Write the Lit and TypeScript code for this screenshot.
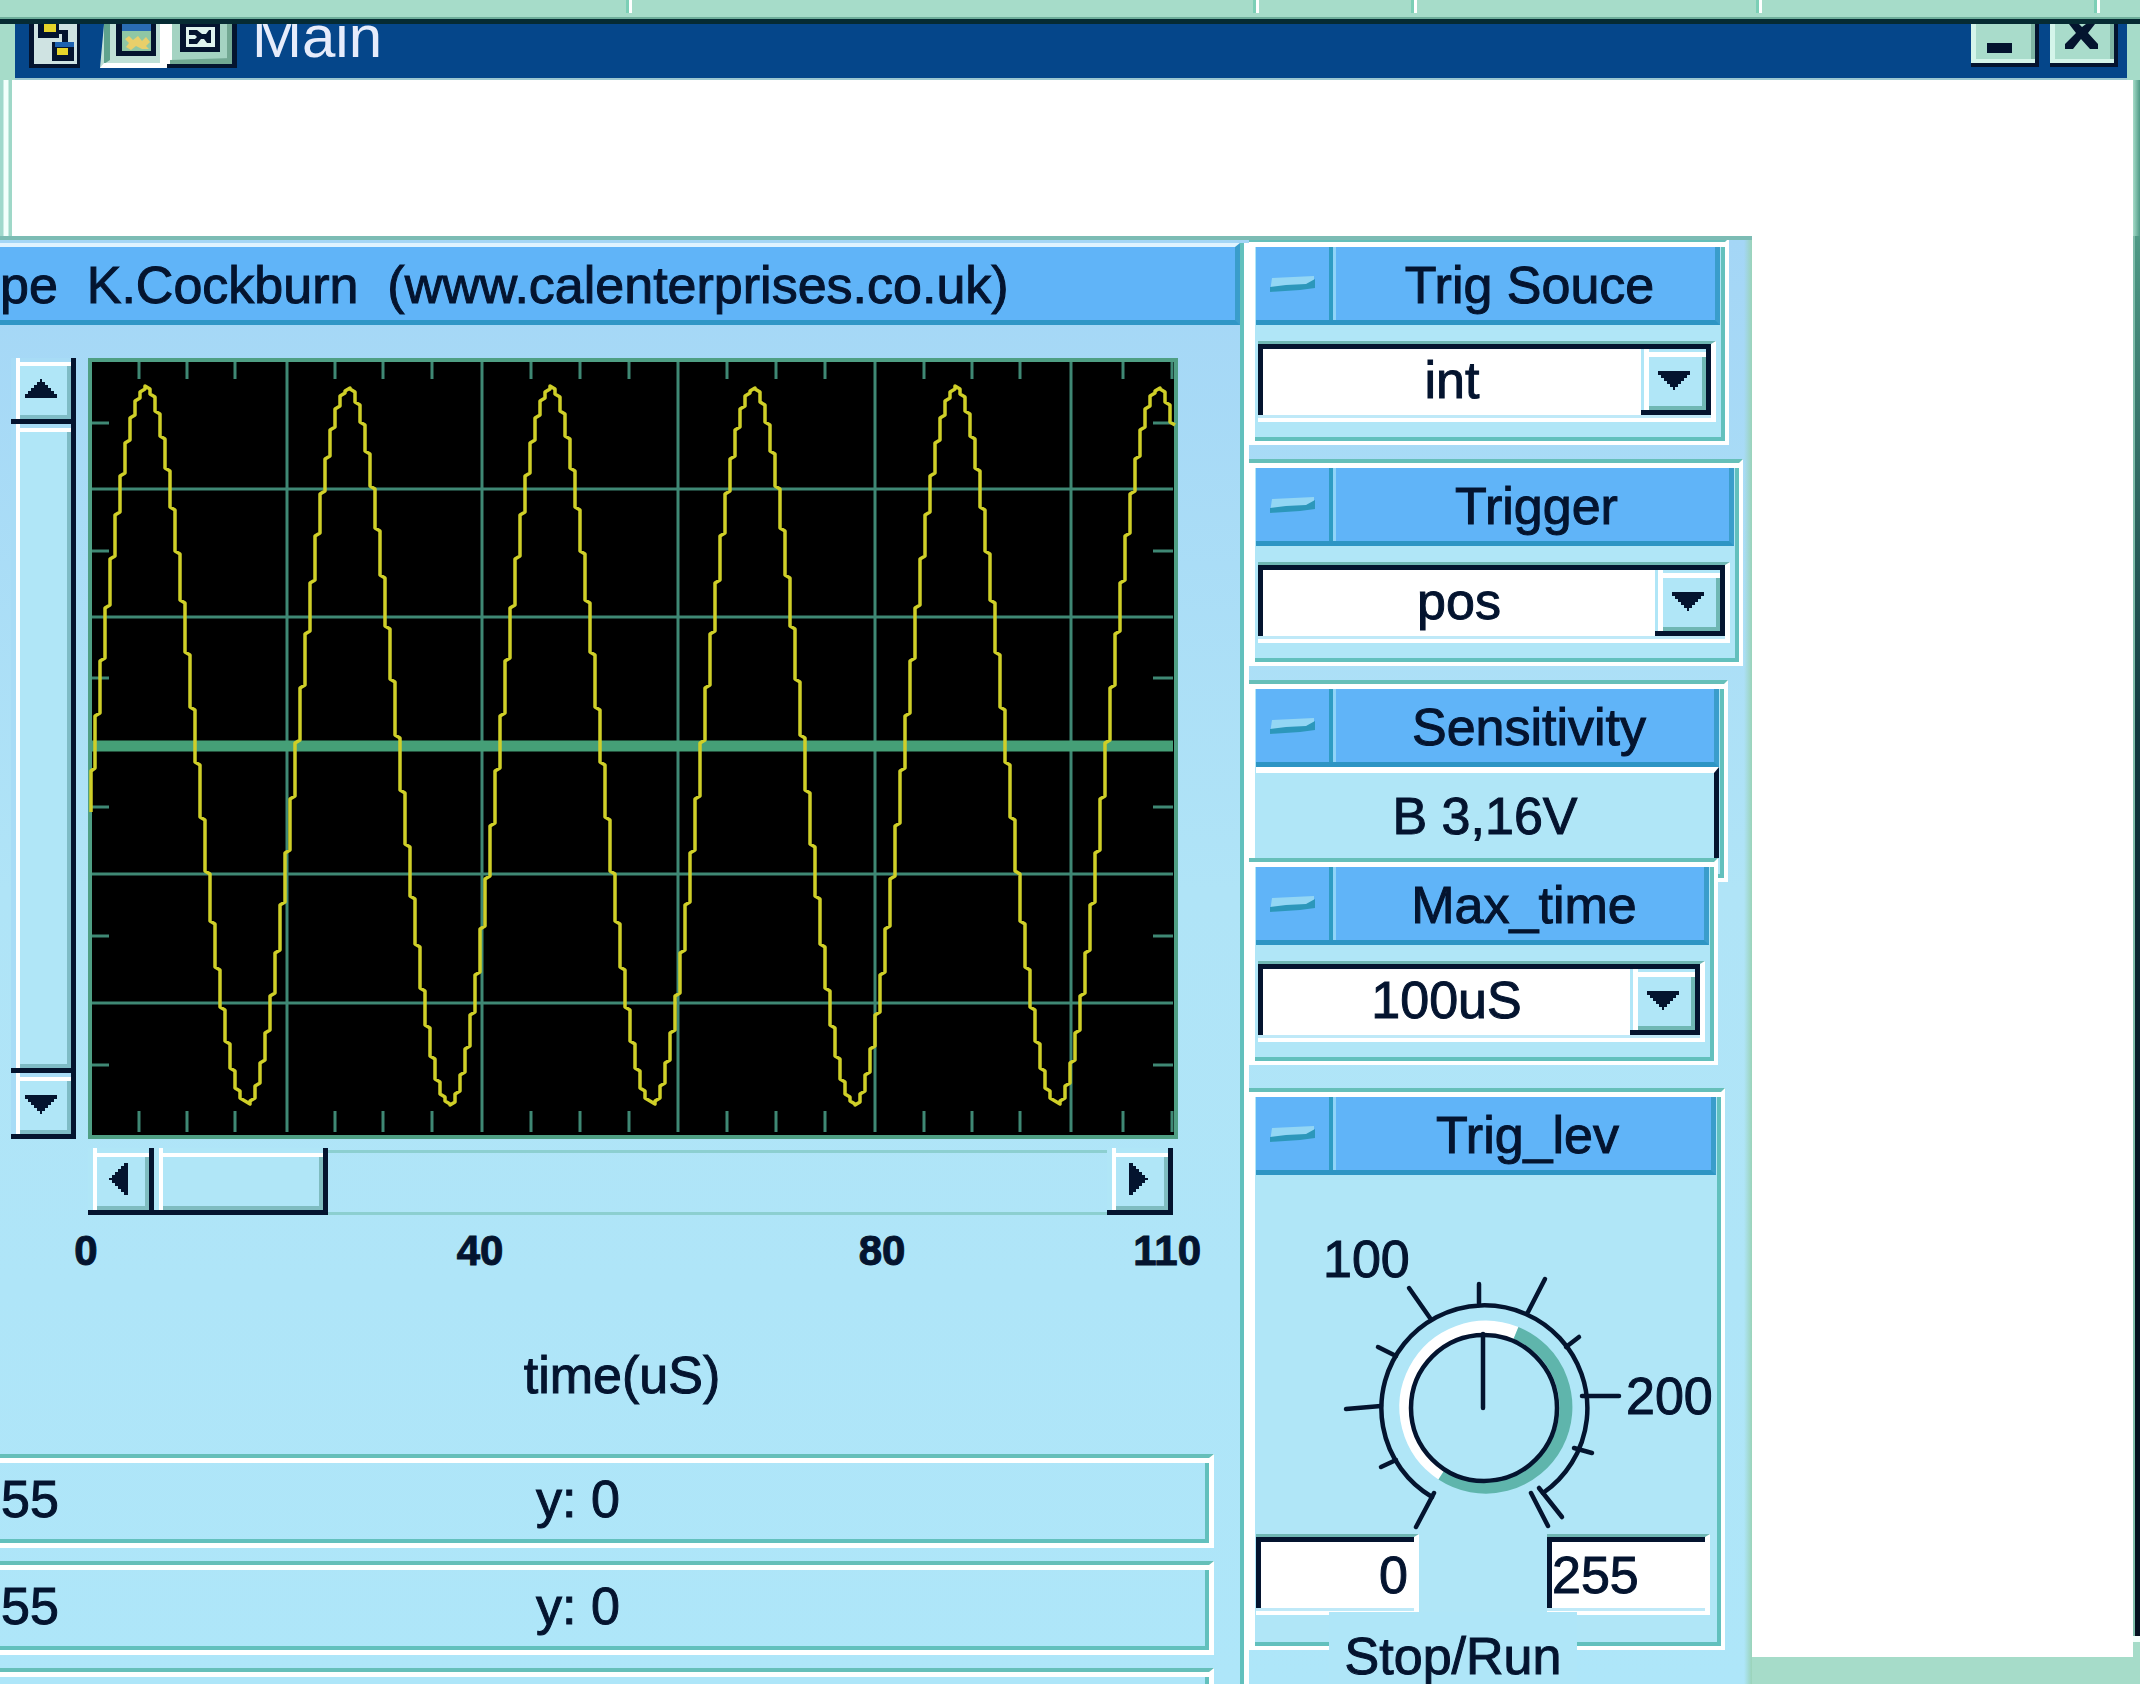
import { LitElement, html, svg, css } from "lit";
import { customElement, property } from "lit/decorators.js";

const theme = css`
  *, *::before, *::after { box-sizing: border-box; }
  .sunken {
    border-top: 3px solid #6fb7b4;
    border-right: 5px solid #fff;
    border-bottom: 4px solid #fff;
    padding-bottom: 3px;
    background: #bfe9f8;
  }
  .well {
    border-top: 5px solid #04142f;
    border-left: 5px solid #04142f;
    background: #fff;
    height: 71px;
  }
`;

/** A titled group box with an etched outline. */
@customElement("group-box")
class GroupBox extends LitElement {
  @property() heading = "";
  static styles = [theme, css`
    :host { display: block; position: relative; }
    .box {
      height: 100%;
      border-top: 4px solid #66bfb9;
      border-right: 4px solid #fff;
      border-bottom: 4px solid #fff;
      padding: 5px 5px 4px 7px;
      background: #b0e6f7;
      box-shadow: inset 6px 0 0 #fff, inset 0 5px 0 #fff, inset -4px -4px 0 #62c0bd;
    }
    .head {
      display: flex;
      height: 78px;
      background: #60b4f8;
      border-bottom: 5px solid #2d95c4;
      border-right: 5px solid #3a9dcb;
    }
    .fold {
      width: 77px;
      padding: 0;
      border: 0;
      border-right: 4px solid #2f9cc4;
      background: none;
      display: grid;
      place-items: center;
    }
    .title {
      flex: 1;
      margin: 0;
      padding-left: 8px;
      border-left: 3px solid #8fd3f8;
      font: 400 52px/76px "Liberation Sans", Arial, sans-serif;
      color: #04142f;
      text-align: center;
      white-space: nowrap;
    }
  `];
  render() {
    return html`<section class="box">
      <div class="head">
        <button class="fold" aria-label="Collapse">
          <svg width="46" height="18" viewBox="0 0 46 18" aria-hidden="true">
            <path d="M2 3L44 1V9L0 17Z" fill="#93d6f4"/>
            <path d="M0 12L16 10L36 9L45 4V13L30 15L0 17Z" fill="#2c97bb"/>
          </svg>
        </button>
        <h2 class="title">${this.heading}</h2>
      </div>
      <slot></slot>
    </section>`;
  }
}

/** Drop-down list with a raised arrow button. */
@customElement("combo-field")
class ComboField extends LitElement {
  @property() value = "";
  @property() label = "";
  static styles = [theme, css`
    :host { display: block; padding: 16px 4px 15px 2px; }
    .well { display: flex; }
    select {
      appearance: none;
      flex: 1;
      min-width: 0;
      border: 0;
      padding: 0 0 4px;
      background: none;
      font: 400 52px/60px "Liberation Sans", Arial, sans-serif;
      color: #04142f;
      text-align: center;
      text-align-last: center;
      -webkit-text-stroke: inherit;
    }
    .drop {
      width: 70px;
      background: #b0e6f7;
      border-right: 5px solid #04142f;
      border-bottom: 5px solid #04142f;
      box-shadow: inset 3px 0 0 #b0e6f7, inset 8px 0 0 #fff, inset 0 3px 0 #b0e6f7, inset 0 8px 0 #fff, inset -4px -4px 0 #6fb7b4;
      display: grid;
      place-items: center;
      pointer-events: none;
    }
  `];
  render() {
    return html`<div class="sunken"><div class="well">
      <select aria-label=${this.label}><option>${this.value}</option></select>
      <span class="drop"><svg width="32" height="20" viewBox="0 0 32 20" aria-hidden="true"><path d="M0 1H32V5H29V8H26V11H23V14H20V17H17V20H15V17H12V14H9V11H6V8H3V5H0Z" fill="#04142f"/></svg></span>
    </div></div>`;
  }
}

/** Rotary control with its scale. */
@customElement("level-knob")
class LevelKnob extends LitElement {
  static styles = css`
    :host { display: block; }
    svg { display: block; }
    text { font: 400 52px "Liberation Sans", Arial, sans-serif; fill: #04142f; stroke: #04142f; stroke-width: 1px; }
    .line { fill: none; stroke: #04142f; stroke-width: 4.5; stroke-linecap: round; }
    .ring { fill: none; stroke-width: 13; }
  `;
  private ticks = [
    [160, 369, 178, 335], [125, 309, 140, 302], [90, 251, 125, 248], [122, 189, 140, 198],
    [153, 130, 174, 160], [223, 126, 223, 145], [289, 121, 272, 154], [323, 179, 310, 189],
    [326, 238, 363, 238], [318, 290, 336, 295], [275, 335, 292, 368], [283, 330, 306, 359],
  ];
  render() {
    return html`<svg width="462" height="359" viewBox="0 17 462 359" role="img" aria-label="Trigger level">
      <path class="ring" stroke="#fff" d="M186 316A80 80 0 0 1 260 175"/>
      <path class="ring" stroke="#5fb5ac" d="M260 175A80 80 0 1 1 186 316"/>
      <circle class="line" cx="228" cy="250" r="73"/>
      <path class="line" d="M176 339A103 103 0 1 1 287 335"/>
      <path class="line" d="M227 176V250"/>
      ${this.ticks.map(([a, b, c, d]) => svg`<path class="line" d="M${a} ${b}L${c} ${d}"/>`)}
      <text x="67" y="119">100</text>
      <text x="370" y="256">200</text>
    </svg>`;
  }
}

/** Oscilloscope display: graticule and trace. */
@customElement("scope-plot")
class ScopePlot extends LitElement {
  static styles = css`
    :host { display: block; flex: 1; min-width: 0; }
    svg { display: block; width: 100%; height: 781px; background: #000; }
    .frame { fill: none; stroke: #4f9f84; stroke-width: 4; }
    .grid { stroke: #3f8874; stroke-width: 3; fill: none; }
    .axis { stroke: #459f77; stroke-width: 11; }
    .trace { fill: none; stroke: #cfcf28; stroke-width: 3.5; stroke-linejoin: round; }
  `;
  private trace() {
    const level = (x: number) => Math.round(388 - 358 * Math.sin((2 * Math.PI * (x - 9)) / 202.5));
    let d = `M3 ${level(3)}`;
    for (let x = 7; x <= 1087; x += 5) {
      const y = level(x);
      const up = level(x - 5) > y;
      d += `V${up ? y + 3 : y - 3}L${x} ${y}`;
    }
    return d;
  }
  render() {
    const columns = [199, 394, 590, 787, 983];
    const rows = [131, 259, 516, 645];
    const minorX = [51, 99, 147, 247, 295, 344, 443, 492, 541, 639, 688, 737, 836, 884, 932, 1035, 1084];
    const minorY = [65, 193, 320, 449, 578, 707];
    return html`<svg viewBox="0 0 1090 781" preserveAspectRatio="none" role="img" aria-label="Waveform">
      ${columns.map((x) => svg`<path class="grid" d="M${x} 2V774"/>`)}
      ${rows.map((y) => svg`<path class="grid" d="M3 ${y}H1085"/>`)}
      ${minorX.map((x) => svg`<path class="grid" d="M${x} 2V21M${x} 753V774"/>`)}
      ${minorY.map((y) => svg`<path class="grid" d="M3 ${y}H21M1065 ${y}H1085"/>`)}
      <path class="axis" d="M3 388H1085"/>
      <rect class="frame" x="2" y="2" width="1086" height="777"/>
      <path class="trace" d=${this.trace()}/>
    </svg>`;
  }
}

@customElement("app-root")
class AppRoot extends LitElement {
  static styles = [theme, css`
    :host {
      display: flex;
      flex-direction: column;
      height: 100vh;
      overflow: hidden;
      background: #a6dcc9;
      color: #04142f;
      font: 400 52px/60px "Liberation Sans", Arial, sans-serif;
    }
    .strip { display: flex; height: 24px; flex: none; padding-left: 4px; border-bottom: 5px solid #062b33; background: #a6dcc9; box-shadow: inset 0 -2px 0 #6fae9b; }
    .seg { height: 13px; border-right: 3px solid #fff; box-shadow: inset -3px 0 0 #7ccfb6; }
    .s1 { flex: 629 1 0; } .s2 { flex: 156 1 0; } .s3 { flex: 344 1 0; } .s4 { flex: 338 1 0; } .s5 { flex: 40 1 0; border: 0; box-shadow: none; }
    .titlebar {
      display: flex;
      flex: none;
      height: 56px;
      overflow: hidden;
      margin: 0 13px 0 15px;
      background: #05468a;
      border-bottom: 2px solid #9cc7d0;
    }
    .glyph { flex: none; display: block; }
    .app { margin-left: 14px; }
    .modes { margin-left: 19px; }
    .name { flex: 1; margin: 0 0 0 15px; font: 400 60px/26px "Liberation Sans", Arial, sans-serif; color: #e6ecfb; }
    .sys { flex: none; width: 68px; height: 43px; padding: 0; border: 0; border-right: 4px solid #04142f; border-bottom: 4px solid #04142f; background: #a9dccb; box-shadow: inset 5px -4px 0 #d4f5ea, inset -4px 0 0 #7fb5a4; margin-right: 11px; }
    .sys:last-child { margin-right: 9px; }
    .sys svg { display: block; }
    .top { display: flex; flex: none; height: 156px; background: #fff; }
    .edge-l { width: 12px; background: linear-gradient(90deg, #a0d8cc 0 3px, #f2fffc 4px 8px, #9fd8c8 9px); }
    .edge-r { width: 7px; margin-left: auto; background: linear-gradient(90deg, #a6dcc9, #4f9a86); }
    .body { display: flex; flex: 1; min-height: 0; }
    .blank { width: 381px; flex: none; display: flex; flex-direction: column; }
    .blank-fill { flex: 1; background: #fff; }
    .blank-foot { height: 27px; }
    .side { width: 7px; flex: none; display: flex; flex-direction: column; }
    .side-fill { flex: 1; background: linear-gradient(90deg, #7dbba9 0 2px, transparent 2px), linear-gradient(180deg, #4f9a86, #123a40 35%, #04101f 70%); }
    .side-foot { height: 48px; border-top: 6px solid #f3fffb; }
    .panel {
      flex: 1;
      min-width: 0;
      display: flex;
      overflow: hidden;
      border-top: 4px solid #7cbcb4;
      background: linear-gradient(90deg, transparent calc(100% - 8px), #9ad3b8), linear-gradient(180deg, #a4d6f6, #b0e4f7 45%, #aee6f9);
      -webkit-text-stroke: 1px #04142f;
    }
    .scope { flex: 1; min-width: 0; margin-top: 3px; border-right: 5px solid #fff; box-shadow: inset -4px 0 0 #62c0bd; }
    .banner {
      margin: 0 4px 0 0;
      height: 82px;
      border-top: 4px solid #dff3ff;
      border-bottom: 5px solid #2f96c6;
      border-right: 5px solid #3a9dcb;
      background: #60b4f8;
      font: 400 52px/76px "Liberation Sans", Arial, sans-serif;
      white-space: pre;
    }
    .view { display: flex; margin: 33px 66px 0 11px; gap: 12px; }
    .vbar { flex: none; width: 65px; display: flex; flex-direction: column; height: 781px; border-right: 5px solid #04142f; }
    .hbar { display: flex; height: 67px; margin: 9px 71px 0 88px; }
    .raised { padding: 0; border: 0; background: #b0e6f7; display: grid; place-items: center; }
    .vbar .raised { border-bottom: 5px solid #04142f; box-shadow: inset 5px 0 0 #a8dcf6, inset 9px 0 0 #fff, inset 0 4px 0 #a8dcf6, inset 0 8px 0 #fff, inset -4px -4px 0 #7fbcc6; }
    .hbar .raised { border-right: 5px solid #04142f; border-bottom: 5px solid #04142f; box-shadow: inset 5px 0 0 #b0e6f7, inset 9px 0 0 #fff, inset 0 5px 0 #b0e6f7, inset 0 9px 0 #fff, inset -4px -4px 0 #7fbcc0; }
    .cap { height: 66px; }
    .vthumb { flex: 1; }
    .hcap { width: 66px; }
    .hthumb { width: 174px; }
    .track { flex: 1; margin-top: 2px; border-top: 3px solid #8ccfd0; border-bottom: 3px solid #8ccfd0; }
    .scale { display: grid; grid-template-columns: 172px 1fr 188px 268px; margin-top: 11px; font-size: 42px; line-height: 50px; font-weight: 700; text-align: center; }
    .last { text-align: right; padding-right: 43px; }
    .unit { margin: 69px 0 49px; text-align: center; }
    .readout {
      display: grid;
      grid-template-columns: 535px 1fr;
      align-items: center;
      height: 94px;
      margin: 0 30px 13px 0;
      padding: 0 0 4px 1px;
      border-top: 4px solid #66bfb9;
      border-right: 5px solid #fff;
      border-bottom: 5px solid #fff;
      box-shadow: inset 0 5px 0 #fff, inset -4px -4px 0 #62c0bd;
    }
    .controls { flex: none; width: 503px; margin-top: -2px; display: flex; flex-direction: column; }
    .controls > * { flex: none; }
    .g1 { margin-right: 23px; }
    .g2 { margin: 14px 9px 0 0; }
    .g3 { margin: 14px 24px -24px 0; height: 202px; }
    .g4 { margin-right: 34px; }
    .g5 { margin: 23px 27px 0 0; }
    .range { display: block; width: 100%; height: 91px; padding: 0; border: 0; border-top: 6px solid #fff; border-right: 5px solid #04142f; background: #b0e6f7; color: inherit; font: inherit; -webkit-text-stroke: inherit; }
    .limits { display: flex; justify-content: space-between; padding: 0 6px 27px 0; }
    .limits .sunken { width: 163px; }
    .limit { display: block; width: 100%; padding: 0 6px 0 0; border-right: 0; border-bottom: 0; font: inherit; color: inherit; border-radius: 0; -webkit-text-stroke: inherit; }
    .low { text-align: right; }
    .run { position: relative; z-index: 1; align-self: flex-start; width: 248px; height: 90px; margin: -38px 0 0 80px; padding: 0 0 2px; border: 0; background: #afe6f8; color: inherit; font: inherit; text-align: center; -webkit-text-stroke: inherit; }
  `];

  private arrow(dir: string) {
    const d: Record<string, string> = {
      up: "M17 6H15V9H12V12H9V15H6V18H3V21H0V25H32V21H29V18H26V15H23V12H20V9H17Z",
      down: "M0 7H32V11H29V14H26V17H23V20H20V23H17V26H15V23H12V20H9V17H6V14H3V11H0Z",
      left: "M6 15V17H9V20H12V23H15V26H18V29H21V32H25V0H21V3H18V6H15V9H12V12H9V15Z",
      right: "M7 0H11V3H14V6H17V9H20V12H23V15H26V17H23V20H20V23H17V26H14V29H11V32H7Z",
    };
    return html`<svg width="32" height="32" viewBox="0 0 32 32" aria-hidden="true"><path d=${d[dir]} fill="#04142f"/></svg>`;
  }

  render() {
    return html`
      <div class="strip"><i class="seg s1"></i><i class="seg s1"></i><i class="seg s2"></i><i class="seg s3"></i><i class="seg s4"></i><i class="seg s5"></i></div>
      <header class="titlebar">
        <svg class="glyph app" width="52" height="44" viewBox="0 0 52 44" aria-hidden="true">
          <path fill="#04142f" d="M0 0H51V44H0Z"/>
          <path fill="#cfe3e2" d="M5 0H48V40H5Z"/>
          <path fill="#04142f" d="M9 0H30V14H9ZM30 6H39V20H33V10H30ZM23 18H45V37H23Z"/>
          <path fill="#1d62b0" d="M26 18H45V23H26Z"/>
          <path fill="#e6d42a" d="M15 0H27V8H15ZM28 24H39V31H28Z"/>
        </svg>
        <svg class="glyph modes" width="137" height="44" viewBox="0 0 137 44" aria-hidden="true">
          <path fill="#bfe0d6" d="M4 0H69V44H0Z"/>
          <path fill="#5fa38d" d="M4 0H10V36L4 40Z"/>
          <path fill="#fff" d="M60 0H72V42L66 44H0L4 39H60Z"/>
          <path fill="#04142f" d="M16 0H56V32H16Z"/>
          <path fill="#8fc7a4" d="M22 0H51V27H22Z"/>
          <path fill="#2a6cb4" d="M22 0H51V7H22Z"/>
          <path fill="#e9cf6a" d="M25 15L29 12L33 16L38 12L42 17L46 13L50 18L46 22L49 25H42L36 22L31 26L26 23L29 19Z"/>
          <path fill="#a4d3c2" d="M72 0H132V38H72Z"/>
          <path fill="#72a893" d="M70 36L132 34V40H70ZM127 0H132V38H127Z"/>
          <path fill="#04142f" d="M132 0H137V44H67V40H132Z"/>
          <path fill="#04142f" d="M80 0H120V28H80Z"/>
          <path fill="#dff3ee" d="M86 3H115V23H86Z"/>
          <path fill="#04142f" d="M89 6H97L102 10H106L109 6H111V19H107L104 15H101L97 20H89V15H95L97 13L95 11H89Z"/>
        </svg>
        <h1 class="name">Main</h1>
        <button class="sys" aria-label="Minimize"><svg width="64" height="39" viewBox="0 0 64 39"><path d="M16 19H41V29H16Z" fill="#04142f"/></svg></button>
        <button class="sys" aria-label="Close"><svg width="64" height="39" viewBox="0 0 64 39"><path d="M19 0H29L32 3L36 0H45L38 9L48 20V25H40L31 15L23 25H15V20L26 9Z" fill="#04142f"/></svg></button>
      </header>
      <div class="top"><div class="edge-l"></div><div class="edge-r"></div></div>
      <div class="body">
        <main class="panel">
          <section class="scope">
            <h2 class="banner">pe  K.Cockburn  (www.calenterprises.co.uk)</h2>
            <div class="view">
              <div class="vbar">
                <button class="raised cap" aria-label="Scroll up">${this.arrow("up")}</button>
                <div class="raised vthumb"></div>
                <button class="raised cap" aria-label="Scroll down">${this.arrow("down")}</button>
              </div>
              <scope-plot></scope-plot>
            </div>
            <div class="hbar">
              <button class="raised hcap" aria-label="Scroll left">${this.arrow("left")}</button>
              <div class="raised hthumb"></div>
              <div class="track"></div>
              <button class="raised hcap" aria-label="Scroll right">${this.arrow("right")}</button>
            </div>
            <div class="scale"><span>0</span><span>40</span><span>80</span><span class="last">110</span></div>
            <div class="unit">time(uS)</div>
            <div class="readout"><span>55</span><span>y: 0</span></div>
            <div class="readout"><span>55</span><span>y: 0</span></div>
            <div class="readout"></div>
          </section>
          <aside class="controls">
            <group-box class="g1" heading="Trig Souce"><combo-field label="Trig Souce" value="int"></combo-field></group-box>
            <group-box class="g2" heading="Trigger"><combo-field label="Trigger" value="pos"></combo-field></group-box>
            <group-box class="g3" heading="Sensitivity"><button class="range">B 3,16V</button></group-box>
            <group-box class="g4" heading="Max_time"><combo-field label="Max_time" value="100uS"></combo-field></group-box>
            <group-box class="g5" heading="Trig_lev">
              <level-knob></level-knob>
              <div class="limits">
                <div class="sunken"><input class="well limit low" aria-label="Minimum" value="0"></div>
                <div class="sunken"><input class="well limit" aria-label="Maximum" value="255"></div>
              </div>
            </group-box>
            <button class="run">Stop/Run</button>
          </aside>
        </main>
        <div class="blank"><div class="blank-fill"></div><div class="blank-foot"></div></div>
        <div class="side"><div class="side-fill"></div><div class="side-foot"></div></div>
      </div>`;
  }
}
